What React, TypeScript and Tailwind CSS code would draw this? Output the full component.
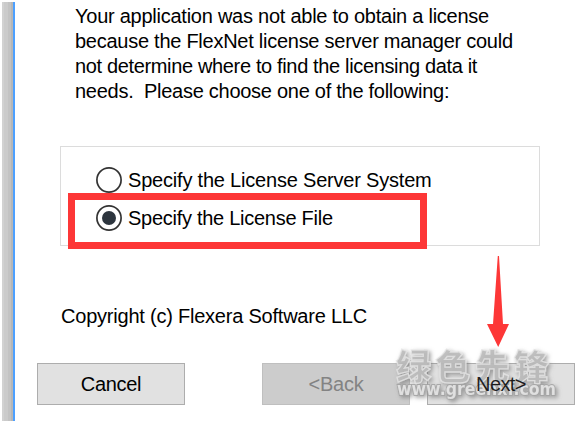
import clsx from 'clsx';

type Option = {
  label: string;
  checked: boolean;
  tracking: string;
};

const message = [
  { text: 'Your application was not able to obtain a license', style: 'tracking-[-0.25px]' },
  { text: 'because the FlexNet license server manager could', style: 'tracking-[-0.26px]' },
  { text: 'not determine where to find the licensing data it', style: 'tracking-[-0.35px]' },
  { text: 'needs.  Please choose one of the following:', style: 'tracking-[-0.27px]' },
];

const options: Option[] = [
  { label: 'Specify the License Server System', checked: false, tracking: 'tracking-[-0.2px]' },
  { label: 'Specify the License File', checked: true, tracking: 'tracking-[-0.27px]' },
];

function Radio({ checked }: { checked: boolean }) {
  return (
    <svg width="26" height="26" viewBox="0 0 26 26" className="shrink-0">
      <circle cx="13" cy="13" r="12.1" fill="#fff" stroke="#333" strokeWidth="1.7" />
      {checked && <circle cx="13" cy="13" r="7" fill="#2d353e" />}
    </svg>
  );
}

function Watermark() {
  return (
    <svg
      width="196"
      height="80"
      viewBox="380 332 196 80"
      className="pointer-events-none absolute top-[332px] left-[380px]"
    >
      <defs>
        <filter id="soft" x="-10%" y="-20%" width="120%" height="150%">
          <feDropShadow dx="2" dy="2" stdDeviation="2.2" floodColor="#777" floodOpacity="0.75" />
        </filter>
      </defs>
      <g filter="url(#soft)">
        <text
          x="396"
          y="380"
          fontSize="35"
          fontWeight="900"
          fontFamily="'Noto Sans CJK SC', sans-serif"
          textLength="153"
          fill="#bdbdbd"
          fillOpacity="0.9"
          stroke="#e6e6e6"
          strokeWidth="1.3"
          strokeOpacity="0.8"
        >
          绿色先锋
        </text>
        <text
          x="397"
          y="395"
          fontSize="17"
          fontWeight="700"
          fontFamily="'DejaVu Sans', sans-serif"
          textLength="159"
          lengthAdjust="spacingAndGlyphs"
          fill="#e9e9e9"
          fillOpacity="0.85"
          stroke="#a2a2a2"
          strokeWidth="1.8"
          strokeOpacity="0.85"
          paintOrder="stroke"
        >
          www.greenxf.com
        </text>
      </g>
    </svg>
  );
}

export default function App() {
  return (
    <div className="relative h-[425px] w-[576px] overflow-hidden bg-white pt-0.5 pl-0.5 font-['Liberation_Sans',Arial,sans-serif] text-[20px] text-black">
      <div className="flex h-[419px]">
        {/* Window edge */}
        <div className="flex w-[13px] shrink-0">
          <div className="w-0.5 bg-[#d2d2d2]" />
          <div className="w-1 bg-[#cbcbcb]" />
          <div className="w-[3px] bg-[#c3c3c3]" />
          <div className="w-0.5 bg-[#b7b7b7]" />
          <div className="w-0.5 bg-[#4da0ff]" />
        </div>

        <div className="flex flex-1 flex-col">
          <div className="ml-[60px] h-[144px] pt-[2px]">
            {message.map((line) => (
              <p key={line.text} className={clsx('leading-[25px] whitespace-pre', line.style)}>
                {line.text}
              </p>
            ))}
          </div>

          <div className="relative ml-[45px] h-[100px] w-[480px] border border-[#dcdcdc] pt-[14px] pl-[35px]">
            {options.map((option) => (
              <label key={option.label} className="flex h-[38px] items-center gap-[6px]">
                <Radio checked={option.checked} />
                <span className={clsx('whitespace-nowrap', option.tracking)}>{option.label}</span>
              </label>
            ))}
            <div className="absolute top-[46px] left-[7px] h-[56px] w-[359px] border-[7px] border-[#fd3737]" />
          </div>

          <p className="mt-[58px] ml-[46px] h-[59px] leading-[25px] tracking-[-0.22px]">
            Copyright (c) Flexera Software LLC
          </p>

          <div className="ml-[22px] flex h-[42px]">
            <button className="w-[148px] border border-[#adadad] bg-[#e1e1e1] tracking-[-0.3px]">
              Cancel
            </button>
            <button className="ml-[77px] w-[148px] border border-[#bfbfbf] bg-[#cccccc] tracking-[-0.2px] text-[#838383]">
              &lt;Back
            </button>
            <button className="ml-[17px] w-[148px] border border-[#adadad] bg-[#e1e1e1] tracking-[-0.6px]">
              {/* the label stays readable over the watermark */}
              <span className="relative z-10 text-black/85">Next&gt;</span>
            </button>
          </div>
        </div>
      </div>

      <svg
        width="24"
        height="92"
        viewBox="0 0 24 92"
        className="absolute top-[256px] left-[486px]"
      >
        <path d="M11.8 0h1.2L17 68h6L12.2 91 1 68h6z" fill="#fd3737" />
      </svg>
      <Watermark />
    </div>
  );
}
